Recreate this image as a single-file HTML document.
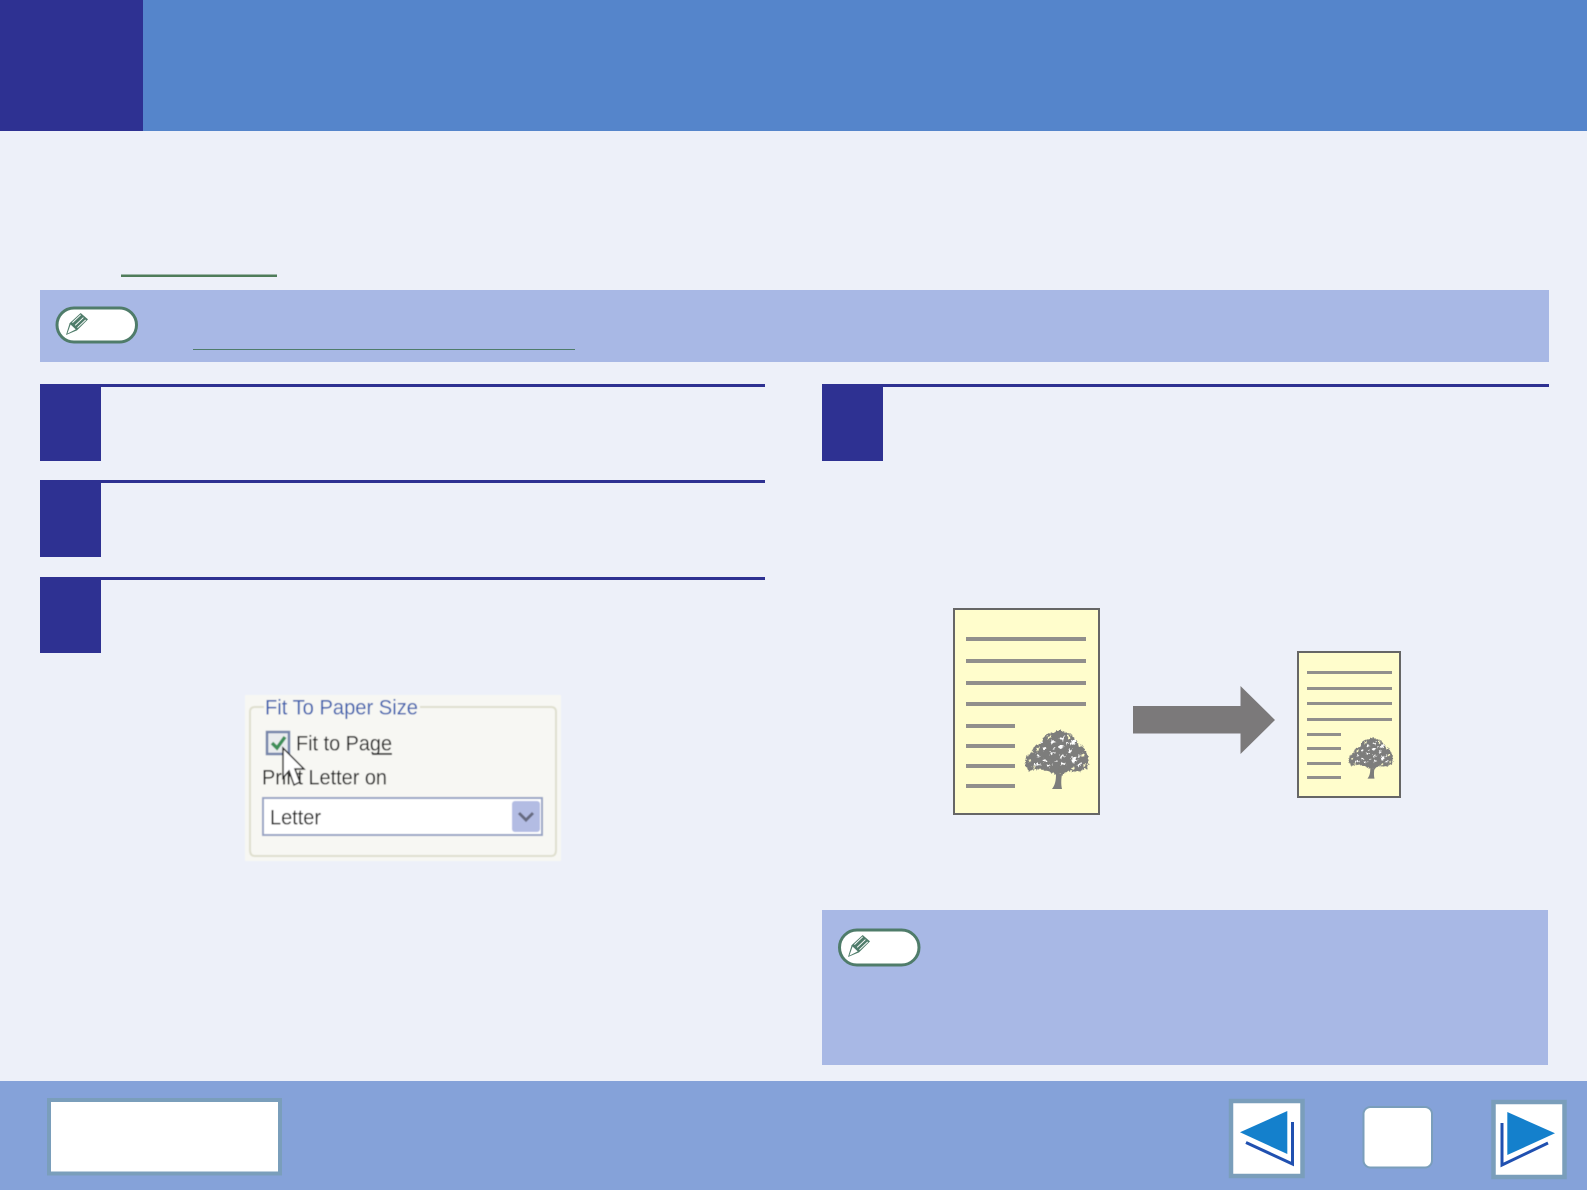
<!DOCTYPE html>
<html>
<head>
<meta charset="utf-8">
<style>
html,body{margin:0;padding:0;background:#edf0f9;width:1587px;height:1190px;overflow:hidden}
svg{display:block}
text{font-family:"Liberation Sans",sans-serif}
</style>
</head>
<body>
<svg width="1587" height="1190" viewBox="0 0 1587 1190" xmlns="http://www.w3.org/2000/svg">
<defs>
<filter id="b" x="-5%" y="-5%" width="110%" height="110%"><feGaussianBlur stdDeviation="0.5"/></filter>
<filter id="rough" x="-10%" y="-10%" width="120%" height="120%">
  <feTurbulence type="fractalNoise" baseFrequency="0.45" numOctaves="2" seed="7" result="n"/>
  <feDisplacementMap in="SourceGraphic" in2="n" scale="5" xChannelSelector="R" yChannelSelector="G"/>
</filter>
<symbol id="pen" viewBox="0 0 24 24" overflow="visible">
  <path d="M0 24 L4 11 L16 0 L24 7 L12 19 Z" fill="#4f7c6a"/>
  <path d="M1.5 22.5 L5 12.6 L10.6 17.8 Z" fill="#fff"/>
  <path d="M7 10.5 L16 2 M10 13.5 L19 5 M12.5 16 L21.5 7.5" stroke="#fff" stroke-width="1" fill="none"/>
</symbol>
<symbol id="tree" viewBox="0 0 66 62" overflow="visible">
  <path d="M28 62 C31 58 32 54 32 47 L38 47 C37 53 37 58 38 62 Z" fill="#7d7d7b"/>
  <g filter="url(#rough)">
    <path d="M32 48 L24 44 L12 42 L5 44 L1 38 L2 30 L7 26 L11 19 L18 15 L21 8 L28 6 L34 3 L41 5 L48 8 L52 14 L58 18 L63 26 L65 33 L63 41 L54 45 L44 44 L38 48 Z" fill="#7d7d7b"/>
    <g fill="#fffdcc">
      <path d="M23 9 l4 0 l-2 4z M43 7 l4 2 l-2 4z M54 14 l4 5 l-4 1z M12 21 l4 -1 l-3 5z M58 26 l3 3 l-4 1z M4 33 l4 -1 l-3 4z M59 38 l3 -1 l-3 4z M8 40 l4 -1 l-2 3z M47 41 l5 -1 l-3 3z"/>
    </g>
    <g fill="#ffffff">
      <path d="M36 11 l5 -2 l-2 5z M28 13 l4 2 l-5 2z M47 14 l5 -2 l-1 5 l-5 2z M18 21 l5 -1 l-3 4z M34 18 l6 1 l-4 4z M44 22 l4 0 l-2 5z M26 24 l6 2 l-6 2z"/>
      <path d="M12 28 l5 1 l-4 2z M35 27 l7 2 l-6 3z M20 31 l5 3 l-6 1z M47 31 l4 -2 l1 5 l-4 2z M9 36 l9 2 l-8 1z M22 38 l7 -1 l-3 3z M37 35 l6 2 l-6 2z M54 27 l3 2 l-3 3z M54 37 l4 -1 l-3 4z"/>
      <path d="M16 15 l2 0 l0 2z M42 15 l2 1 l-2 2z M30 20 l2 1 l-3 1z M31 33 l2 1 l-2 2z"/>
    </g>
  </g>
  <path d="M34 47 L25 39 M34 47 L20 29 M35 46 L44 35 M35 38 L32 18 M35 30 L46 18 M28 32 L22 18 M35 47 V36" stroke="#7d7d7b" stroke-width="1.6" fill="none"/>
</symbol>
</defs>

<rect width="1587" height="1190" fill="#edf0f9"/>

<!-- header -->
<rect x="0" y="0" width="1587" height="131" fill="#5585cb"/>
<rect x="0" y="0" width="143" height="131" fill="#2e3192"/>

<!-- intro link underline -->
<rect x="121" y="274.500" width="156" height="2.500" fill="#4f7c5a"/>

<!-- top note -->
<rect x="40" y="290" width="1509" height="72" fill="#a8b8e5"/>
<rect x="57" y="308" width="79.500" height="34" rx="17" fill="#fff" stroke="#4f7c6a" stroke-width="3"/>
<use href="#pen" x="65" y="313" width="24" height="22"/>
<rect x="193" y="349" width="382" height="1" fill="#4f7c6a"/>

<!-- left steps -->
<rect x="40" y="384" width="725" height="3" fill="#2e3192"/>
<rect x="40" y="384" width="61" height="77" fill="#2e3192"/>
<rect x="40" y="480" width="725" height="3" fill="#2e3192"/>
<rect x="40" y="480" width="61" height="77" fill="#2e3192"/>
<rect x="40" y="577" width="725" height="3" fill="#2e3192"/>
<rect x="40" y="577" width="61" height="76" fill="#2e3192"/>

<!-- right step -->
<rect x="822" y="384" width="727" height="3" fill="#2e3192"/>
<rect x="822" y="384" width="61" height="77" fill="#2e3192"/>

<!-- dialog -->
<g filter="url(#b)">
  <rect x="245" y="695" width="316" height="166" fill="#f7f7f3"/>
  <path d="M264 707 H255 Q250 707 250 712 V850 Q250 856 255 856 H551 Q556 856 556 850 V712 Q556 707 551 707 H420" fill="none" stroke="#dfdfcf" stroke-width="2"/>
  <text x="265" y="714.500" font-size="21" fill="#3a5fae" textLength="153" lengthAdjust="spacingAndGlyphs">Fit To Paper Size</text>
  <rect x="267" y="732" width="22" height="22" fill="#e9ecee" stroke="#7484aa" stroke-width="2.500"/>
  <path d="M272 743 L277 748 L285 737" fill="none" stroke="#3d8f58" stroke-width="3.500"/>
  <text x="296" y="750.500" font-size="21" fill="#1d1d1d" textLength="96" lengthAdjust="spacingAndGlyphs">Fit to Page</text>
  <rect x="372" y="753" width="20" height="1.800" fill="#222"/>
  <text x="262" y="784.500" font-size="21" fill="#1d1d1d" textLength="125" lengthAdjust="spacingAndGlyphs">Print Letter on</text>
  <rect x="263" y="798" width="279" height="37" fill="#fff" stroke="#97a3c4" stroke-width="2"/>
  <text x="270" y="824.500" font-size="21" fill="#1d1d1d" textLength="51" lengthAdjust="spacingAndGlyphs">Letter</text>
  <rect x="512" y="801" width="28" height="31" rx="3" fill="#b3bce3"/>
  <path d="M519 813 L526 820 L533 813" fill="none" stroke="#666a80" stroke-width="3"/>
  <path d="M283 748 V778 L289 771 L294 785 L300 782 L295 769 L304 769 Z" fill="#fff" stroke="#222" stroke-width="1.500"/>
</g>

<!-- large page -->
<rect x="954" y="609" width="145" height="205" fill="#fffdcc" stroke="#666" stroke-width="2"/>
<g fill="#918f8c">
  <rect x="966" y="637" width="120" height="4"/>
  <rect x="966" y="659" width="120" height="4"/>
  <rect x="966" y="681" width="120" height="4"/>
  <rect x="966" y="702" width="120" height="4"/>
  <rect x="966" y="724" width="49" height="4"/>
  <rect x="966" y="744" width="49" height="4"/>
  <rect x="966" y="764" width="49" height="4"/>
  <rect x="966" y="784" width="49" height="4"/>
</g>
<use href="#tree" x="1024" y="727" width="66" height="62"/>

<!-- arrow -->
<path d="M1133 706 H1240.5 V686 L1275 720 L1240.5 754 V733.5 H1133 Z" fill="#7b797a"/>

<!-- small page -->
<rect x="1298" y="652" width="102" height="145" fill="#fffdcc" stroke="#666" stroke-width="2"/>
<g fill="#918f8c">
  <rect x="1307" y="671" width="85" height="3"/>
  <rect x="1307" y="687" width="85" height="3"/>
  <rect x="1307" y="702" width="85" height="3"/>
  <rect x="1307" y="718" width="85" height="3"/>
  <rect x="1307" y="733" width="34" height="3"/>
  <rect x="1307" y="747" width="34" height="3"/>
  <rect x="1307" y="762" width="34" height="3"/>
  <rect x="1307" y="776" width="34" height="3"/>
</g>
<use href="#tree" x="1348" y="735" width="46" height="44"/>

<!-- bottom note -->
<rect x="822" y="910" width="726" height="155" fill="#a8b8e5"/>
<rect x="839.500" y="930" width="79.500" height="35" rx="17.500" fill="#fff" stroke="#4f7c6a" stroke-width="3"/>
<use href="#pen" x="847" y="935" width="24" height="22"/>

<!-- footer -->
<rect x="0" y="1081" width="1587" height="109" fill="#85a2d9"/>
<rect x="49" y="1100" width="231" height="73.500" fill="#fff" stroke="#7a9ebb" stroke-width="4"/>

<rect x="1231" y="1101" width="71.500" height="75" fill="#fff" stroke="#7a9ebb" stroke-width="4.500"/>
<path d="M1240 1132.3 L1287.3 1111 V1154 Z" fill="#1480cc"/>
<path d="M1246 1142.500 L1292.500 1164 V1122" fill="none" stroke="#2050b0" stroke-width="3"/>

<rect x="1363.500" y="1107" width="68.500" height="60.500" rx="7" fill="#fff" stroke="#7a9ebb" stroke-width="2"/>

<rect x="1493.500" y="1102" width="71" height="75" fill="#fff" stroke="#7a9ebb" stroke-width="4.500"/>
<path d="M1507.3 1112 L1555 1133.3 L1507.3 1155 Z" fill="#1480cc"/>
<path d="M1548 1143 L1502 1165 V1123" fill="none" stroke="#2050b0" stroke-width="3"/>
</svg>
</body>
</html>
